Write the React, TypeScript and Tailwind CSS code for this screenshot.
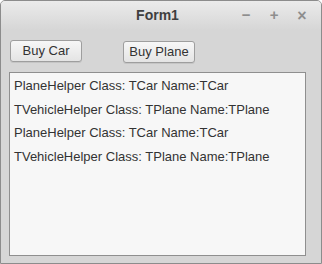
import React from 'react';

const lines = [
  'PlaneHelper Class: TCar Name:TCar',
  'TVehicleHelper Class: TPlane Name:TPlane',
  'PlaneHelper Class: TCar Name:TCar',
  'TVehicleHelper Class: TPlane Name:TPlane',
];

export default function App() {
  return (
    <div
      className="w-[322px] h-[264px] flex flex-col bg-[#d6d6d6] border border-[#8c8c8c] rounded-t-[5px] overflow-hidden text-[#3c3c3c]"
      style={{ fontFamily: '"Liberation Sans", Arial, sans-serif' }}
    >
      {/* title bar */}
      <div className="h-[29px] flex items-center bg-gradient-to-b from-[#ebebeb] to-[#d6d6d6]">
        <div className="flex-1" />
        <div className="text-[14px] font-bold text-[#3f3f3f] pl-[4px]">Form1</div>
        <div className="flex-1 flex justify-end items-center gap-[12px] pr-[11px] text-[#8e8e8e] font-bold">
          <span className="w-[16px] text-center text-[15px]">−</span>
          <span className="w-[16px] text-center text-[15px]">+</span>
          <span className="w-[16px] text-center text-[16px]">×</span>
        </div>
      </div>

      <div className="flex-1 flex flex-col pl-[8px] pt-[10px]">
        <div className="flex items-start gap-[41px] pl-[1px]">
          <button className="w-[72px] h-[22px] rounded-[3px] border border-[#9e9e9e] bg-gradient-to-b from-[#f7f7f7] to-[#e4e4e4] shadow-[0_1px_0_rgba(0,0,0,0.08)] text-[13px] text-[#333]">
            Buy Car
          </button>
          <button className="w-[72px] h-[22px] mt-[1px] rounded-[3px] border border-[#9e9e9e] bg-gradient-to-b from-[#f7f7f7] to-[#e4e4e4] shadow-[0_1px_0_rgba(0,0,0,0.08)] text-[13px] text-[#333]">
            Buy Plane
          </button>
        </div>
        <div className="mt-[9px] w-[297px] h-[184px] border border-[#8f8f8f] bg-[#f7f7f7] pl-[4px] pt-[1px]">
          {lines.map((l, i) => (
            <div key={i} className="h-[23.7px] leading-[23.7px] text-[13px] text-[#333] whitespace-nowrap">
              {l}
            </div>
          ))}
        </div>
      </div>
    </div>
  );
}
